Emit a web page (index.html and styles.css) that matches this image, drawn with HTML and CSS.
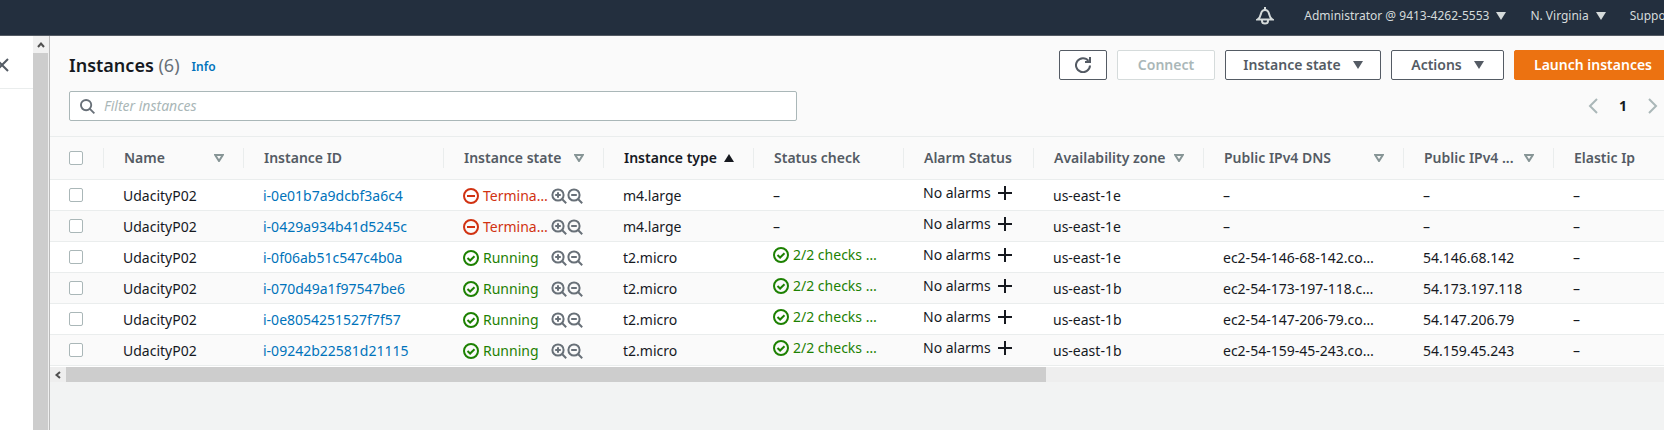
FILE: index.html
```html
<!DOCTYPE html>
<html lang="en">
<head>
<meta charset="utf-8">
<title>Instances</title>
<link rel="stylesheet" href="styles.css">
</head>
<body>
<svg class="sprite" aria-hidden="true">
  <symbol id="minus" viewBox="0 0 16 16"><circle cx="8" cy="8" r="7"/><path d="M4 8h8"/></symbol>
  <symbol id="check" viewBox="0 0 16 16"><circle cx="8" cy="8" r="7"/><path d="M4.5 8l2.6 2.5 4.4-4.2"/></symbol>
  <symbol id="zoom-in" viewBox="0 0 16 16"><circle cx="7" cy="7" r="5.6"/><path d="M11 11l4.2 4.2M4.2 7h5.6M7 4.2v5.6"/></symbol>
  <symbol id="zoom-out" viewBox="0 0 16 16"><circle cx="7" cy="7" r="5.6"/><path d="M11 11l4.2 4.2M4.2 7h5.6"/></symbol>
  <symbol id="plus" viewBox="0 0 14 14"><path d="M7 0v14M0 7h14"/></symbol>
  <symbol id="down" viewBox="0 0 10 8"><path d="M0 0h10L5 8z"/></symbol>
  <symbol id="up" viewBox="0 0 10 8"><path d="M0 8h10L5 0z"/></symbol>
  <symbol id="sort" viewBox="0 0 10 8"><path d="M1.2 1h7.6L5 7z"/></symbol>
</svg>
<div class="page">
  <header class="topbar">
    <button class="nav-btn bell" aria-label="Notifications"><svg viewBox="0 0 18 18"><path d="M1.500 12.500C4 11 4.500 9 4.900 7C5.400 4.600 6.700 3 9 3S12.600 4.600 13.100 7C13.500 9 14 11 16.500 12.500Z"/><path d="M6 13v1a3 2.500 0 0 0 6 0v-1M9 0v3"/></svg></button>
    <button class="nav-btn">Administrator @ 9413-4262-5553 <svg class="caret"><use href="#down"/></svg></button>
    <button class="nav-btn">N. Virginia <svg class="caret"><use href="#down"/></svg></button>
    <button class="nav-btn">Support <svg class="caret"><use href="#down"/></svg></button>
  </header>
  <div class="body">
    <aside class="side">
      <div class="side-head"><button class="close" aria-label="Close navigation"><svg viewBox="0 0 14 14"><path d="M1 1l12 12M13 1L1 13"/></svg></button></div>
    </aside>
    <div class="vscroll"><svg class="arrow" viewBox="0 0 8 8"><path d="M1 6l3-3.500 3 3.500"/></svg></div>
    <main class="main">
      <section class="tools">
        <div class="title-row">
          <h1>Instances <span class="count">(6)</span></h1>
          <a class="info" href="#info">Info</a>
          <div class="actions">
            <button class="btn refresh" aria-label="Refresh"><svg viewBox="0 0 16 16"><path d="M15 8.500A7 7 0 1 1 13.500 3.800"/><path d="M15 0v5H10"/></svg></button>
            <button class="btn connect" disabled>Connect</button>
            <button class="btn state-btn">Instance state <svg class="caret"><use href="#down"/></svg></button>
            <button class="btn actions-btn">Actions <svg class="caret"><use href="#down"/></svg></button>
            <button class="btn primary">Launch instances</button>
          </div>
        </div>
        <div class="filter-row">
          <label class="search"><svg viewBox="0 0 16 16"><circle cx="6.500" cy="6.500" r="5.500"/><path d="M10.500 10.500l4.800 4.800"/></svg><input type="search" placeholder="Filter instances" aria-label="Filter instances"></label>
          <nav class="pager" aria-label="Pages">
            <button aria-label="Previous page"><svg viewBox="0 0 10 16"><path d="M9 1L2 8l7 7"/></svg></button>
            <b>1</b>
            <button aria-label="Next page"><svg viewBox="0 0 10 16"><path d="M1 1l7 7-7 7"/></svg></button>
          </nav>
        </div>
      </section>
      <table class="grid">
        <colgroup><col class="c-check"><col class="c-name"><col class="c-id"><col class="c-state"><col class="c-type"><col class="c-type"><col class="c-alarm"><col class="c-zone"><col class="c-id"><col class="c-type"><col></colgroup>
        <thead><tr>
          <th><input type="checkbox" aria-label="Select all"></th>
          <th><div>Name<svg class="sort"><use href="#sort"/></svg></div></th>
          <th><div>Instance ID</div></th>
          <th><div>Instance state<svg class="sort"><use href="#sort"/></svg></div></th>
          <th class="sorted"><div>Instance type<svg class="caret"><use href="#up"/></svg></div></th>
          <th><div>Status check</div></th>
          <th><div>Alarm Status</div></th>
          <th><div>Availability zone<svg class="sort"><use href="#sort"/></svg></div></th>
          <th><div>Public IPv4 DNS<svg class="sort"><use href="#sort"/></svg></div></th>
          <th><div>Public IPv4 ...<svg class="sort"><use href="#sort"/></svg></div></th>
          <th><div>Elastic Ip</div></th>
        </tr></thead>
        <tbody id="rows"></tbody>
      </table>
      <div class="hscroll"><svg class="arrow" viewBox="0 0 8 8"><path d="M6 1L2.500 4 6 7"/></svg><div class="thumb"></div></div>
    </main>
  </div>
</div>
<script src="rows.js"></script>
</body>
</html>
```
FILE: rows.js
```js
const instances = [
  ["i-0e01b7a9dcbf3a6c4", false, "m4.large", "us-east-1e", "–", "–"],
  ["i-0429a934b41d5245c", false, "m4.large", "us-east-1e", "–", "–"],
  ["i-0f06ab51c547c4b0a", true, "t2.micro", "us-east-1e", "ec2-54-146-68-142.co…", "54.146.68.142"],
  ["i-070d49a1f97547be6", true, "t2.micro", "us-east-1b", "ec2-54-173-197-118.c…", "54.173.197.118"],
  ["i-0e8054251527f7f57", true, "t2.micro", "us-east-1b", "ec2-54-147-206-79.co…", "54.147.206.79"],
  ["i-09242b22581d21115", true, "t2.micro", "us-east-1b", "ec2-54-159-45-243.co…", "54.159.45.243"],
];
const icon = (name, cls) => `<svg class="${cls}"><use href="#${name}"/></svg>`;
document.getElementById("rows").innerHTML = instances.map(([id, running, type, zone, dns, ip]) => `
  <tr>
    <td><input type="checkbox" aria-label="Select ${id}"></td>
    <td>UdacityP02</td>
    <td><a href="#${id}">${id}</a></td>
    <td><div class="state ${running ? "ok" : "bad"}">${icon(running ? "check" : "minus", "status")}<span class="label">${running ? "Running" : "Termina…"}</span><button aria-label="Include state">${icon("zoom-in", "lens")}</button><button aria-label="Exclude state">${icon("zoom-out", "lens")}</button></div></td>
    <td>${type}</td>
    <td>${running ? `<div class="raised ok">${icon("check", "status")}2/2 checks …</div>` : "–"}</td>
    <td><div class="raised alarm">No alarms<button aria-label="Add alarm">${icon("plus", "plus")}</button></div></td>
    <td>${zone}</td>
    <td>${dns}</td>
    <td>${ip}</td>
    <td>–</td>
  </tr>`).join("");
```
FILE: styles.css
```css
* { box-sizing: border-box; }
body { margin: 0; overflow: hidden; background: #f2f3f3; color: #16191f; font: 14px/20px "Noto Sans", "Open Sans", sans-serif; }
button { margin: 0; padding: 0; border: 0; background: none; color: inherit; font: inherit; white-space: nowrap; }
a { color: #0073bb; text-decoration: none; }
svg { display: block; flex: none; fill: none; stroke: currentColor; stroke-width: 2; }
.sprite { position: absolute; width: 0; height: 0; }
.caret { width: 10px; height: 8px; fill: currentColor; stroke: none; }
.page { display: flex; flex-direction: column; width: calc(100% + 28px); min-height: 100vh; }

.topbar { display: flex; justify-content: flex-end; align-items: center; gap: 24px; height: 36px; padding-bottom: 4px; background: #232f3e; border-bottom: 1px solid #545b64; color: #d5dbdb; font-size: 12px; }
.nav-btn { display: flex; align-items: center; gap: 7px; }
.bell { margin-right: 6px; }
.bell svg { width: 18px; height: 18px; }

.body { display: flex; flex: 1; }
.side { flex: none; width: 33px; background: #fff; }
.side-head { display: flex; align-items: center; height: 53px; padding-top: 6px; border-bottom: 1px solid #eaeded; overflow: hidden; }
.close { margin-left: -5px; color: #545b64; }
.close svg { width: 14px; height: 14px; }
.vscroll { display: flex; flex-direction: column; width: 17px; background: #cdcdcd; border-right: 1px solid #bbb; box-shadow: inset -1px 0 #f0f0f0; }
.arrow { width: 8px; height: 8px; color: #505050; }
.vscroll .arrow { box-sizing: content-box; padding: 5px 4px 4px; background: #f1f1f1; }
.main { flex: 1; min-width: 0; overflow: hidden; }

.tools { padding: 14px 20px 15px 19px; background: #fafafa; }
.title-row, .filter-row { display: flex; align-items: center; }
h1 { margin: 0; font-size: 18px; font-weight: 600; line-height: 30px; }
.count { color: #687078; font-weight: 400; }
.info { margin-left: 12px; padding-top: 3px; font-size: 12px; font-weight: 600; }
.actions { display: flex; gap: 10px; margin-left: auto; }
.btn { display: flex; align-items: center; justify-content: center; gap: 12px; height: 30px; border: 1px solid #545b64; border-radius: 2px; background: #fff; color: #545b64; font-weight: 600; }
.refresh { width: 48px; }
.refresh svg { width: 16px; height: 16px; }
.connect { width: 98px; border-color: #d5dbdb; color: #aab7b8; }
.state-btn { width: 156px; }
.actions-btn { width: 113px; }
.primary { width: 158px; border-color: #ec7211; background: #ec7211; color: #fff; }
.filter-row { justify-content: space-between; margin-top: 11px; }
.search { display: flex; align-items: center; gap: 9px; flex: 0 1 728px; height: 30px; padding: 0 10px; border: 1px solid #aab7b8; border-radius: 2px; background: #fff; color: #687078; }
.search svg { width: 15px; height: 15px; }
.search input { flex: 1; min-width: 0; padding: 0; border: 0; outline: 0; background: none; font: inherit; }
.search input::placeholder { color: #aab7b8; font-style: italic; opacity: 1; }
.pager { display: flex; align-items: center; gap: 21px; padding-right: 14px; }
.pager button { color: #aab7b8; }
.pager svg { width: 10px; height: 16px; }

.grid { width: 100%; table-layout: fixed; border-collapse: separate; border-spacing: 0; background: #fff; }
.c-check { width: 53px; }
.c-name { width: 140px; }
.c-id { width: 200px; }
.c-state { width: 160px; }
.c-type { width: 150px; }
.c-alarm { width: 130px; }
.c-zone { width: 170px; }
th { height: 44px; padding: 0; border: solid #eaeded; border-width: 1px 0; background: #fafafa; color: #545b64; font-weight: 600; text-align: left; white-space: nowrap; }
th div { display: flex; align-items: center; justify-content: space-between; height: 20px; padding: 0 19px 0 20px; border-left: 1px solid #eaeded; }
.sorted { color: #16191f; }
.sort { width: 10px; height: 8px; color: #879596; }
td { height: 31px; padding: 2px 0 0 20px; border-bottom: 1px solid #eaeded; white-space: nowrap; }
tbody tr:nth-child(even) { background: #fafafa; }
th:first-child, td:first-child { padding: 0 0 0 19px; }
input[type="checkbox"] { display: block; width: 14px; height: 14px; margin: 0; border: 1px solid #aab7b8; border-radius: 2px; appearance: none; background: #fff; }
.state, .raised { display: flex; align-items: center; }
.status { width: 16px; height: 16px; margin-right: 4px; }
.label { width: 68px; }
.lens { width: 16px; height: 16px; color: #687078; }
.ok { color: #1d8102; }
.bad { color: #d13212; }
.raised { padding-bottom: 6px; }
.alarm { gap: 7px; }
.plus { width: 14px; height: 14px; }
.hscroll { display: flex; align-items: center; height: 16px; border-top: 1px solid #fff; background: #eee; }
.hscroll .arrow { margin: 0 4px; }
.thumb { width: 59.7%; height: 15px; background: #cdcdcd; }
```
